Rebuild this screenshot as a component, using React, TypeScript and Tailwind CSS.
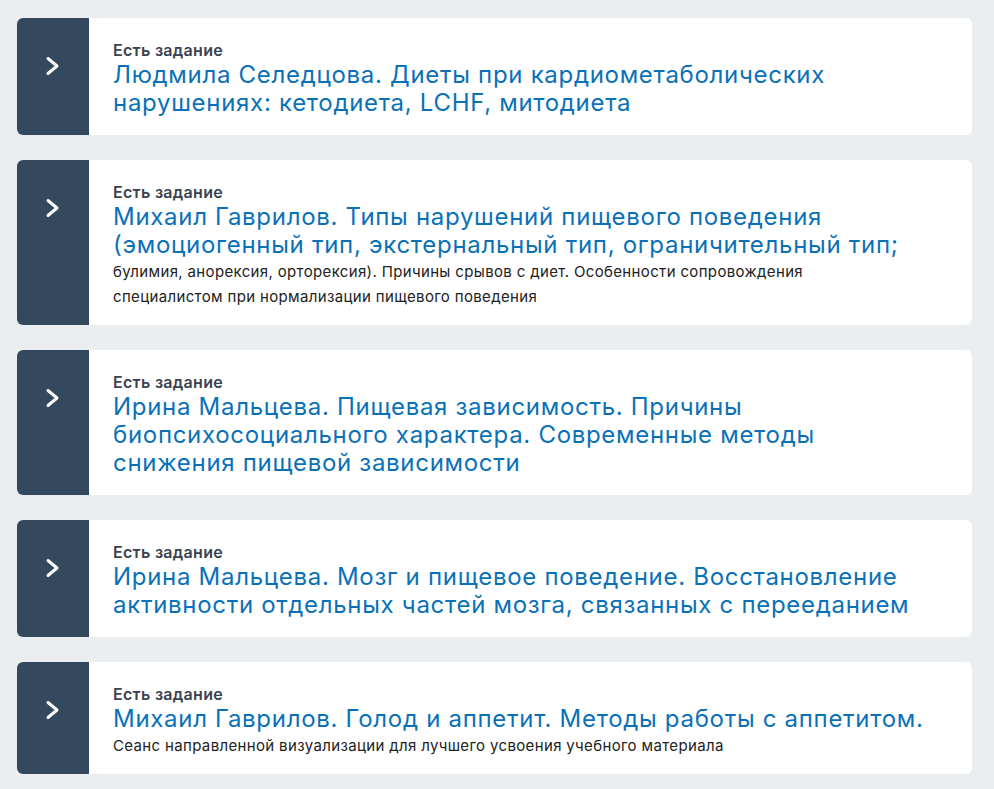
import React from "react";

type Lesson = {
  title: string;
  note?: string;
};

const lessons: Lesson[] = [
  {
    title:
      "Людмила Селедцова. Диеты при кардиометаболических нарушениях: кетодиета, LCHF, митодиета",
  },
  {
    title:
      "Михаил Гаврилов. Типы нарушений пищевого поведения (эмоциогенный тип, экстернальный тип, ограничительный тип;",
    note:
      "булимия, анорексия, орторексия). Причины срывов с диет. Особенности сопровождения специалистом при нормализации пищевого поведения",
  },
  {
    title:
      "Ирина Мальцева. Пищевая зависимость. Причины биопсихосоциального характера. Современные методы снижения пищевой зависимости",
  },
  {
    title:
      "Ирина Мальцева. Мозг и пищевое поведение. Восстановление активности отдельных частей мозга, связанных с перееданием",
  },
  {
    title: "Михаил Гаврилов. Голод и аппетит. Методы работы с аппетитом.",
    note: "Сеанс направленной визуализации для лучшего усвоения учебного материала",
  },
];

function Chevron() {
  return (
    <svg width="16" height="20" viewBox="0 0 16 20" fill="none">
      <path
        d="M3 2.5 L12 10 L3 17.5"
        stroke="#ffffff"
        strokeWidth="3"
        strokeLinecap="round"
        strokeLinejoin="round"
      />
    </svg>
  );
}

function LessonCard({ lesson }: { lesson: Lesson }) {
  return (
    <div className="flex rounded-[6px] bg-white overflow-hidden">
      <div className="w-[72px] shrink-0 bg-[#34495e] flex justify-center pt-[38px]">
        <Chevron />
      </div>
      <div
        className={
          lesson.note
            ? "flex-1 pl-[24px] pr-[44px] pt-[22px] pb-[16px]"
            : "flex-1 pl-[24px] pr-[44px] pt-[22px] pb-[18px]"
        }
      >
        <div className="text-[16px] leading-[20px] mb-[1px] font-semibold tracking-[0.3px] text-[#3a4250]">
          Есть задание
        </div>
        <div className="text-[24px] leading-[28px] tracking-[0.7px] text-[#0a71b8]">
          {lesson.title}
        </div>
        {lesson.note && (
          <div className="text-[15px] leading-[25px] tracking-[0.35px] text-[#222222] max-w-[740px]">
            {lesson.note}
          </div>
        )}
      </div>
    </div>
  );
}

export default function App() {
  return (
    <div
      className="min-h-[789px] bg-[#ebeef0] pl-[17px] pr-[22px] pt-[18px] pb-[16px] flex flex-col gap-[25px]"
      style={{ fontFamily: "Inter, 'Noto Sans', sans-serif" }}
    >
      {lessons.map((l, i) => (
        <LessonCard key={i} lesson={l} />
      ))}
    </div>
  );
}
